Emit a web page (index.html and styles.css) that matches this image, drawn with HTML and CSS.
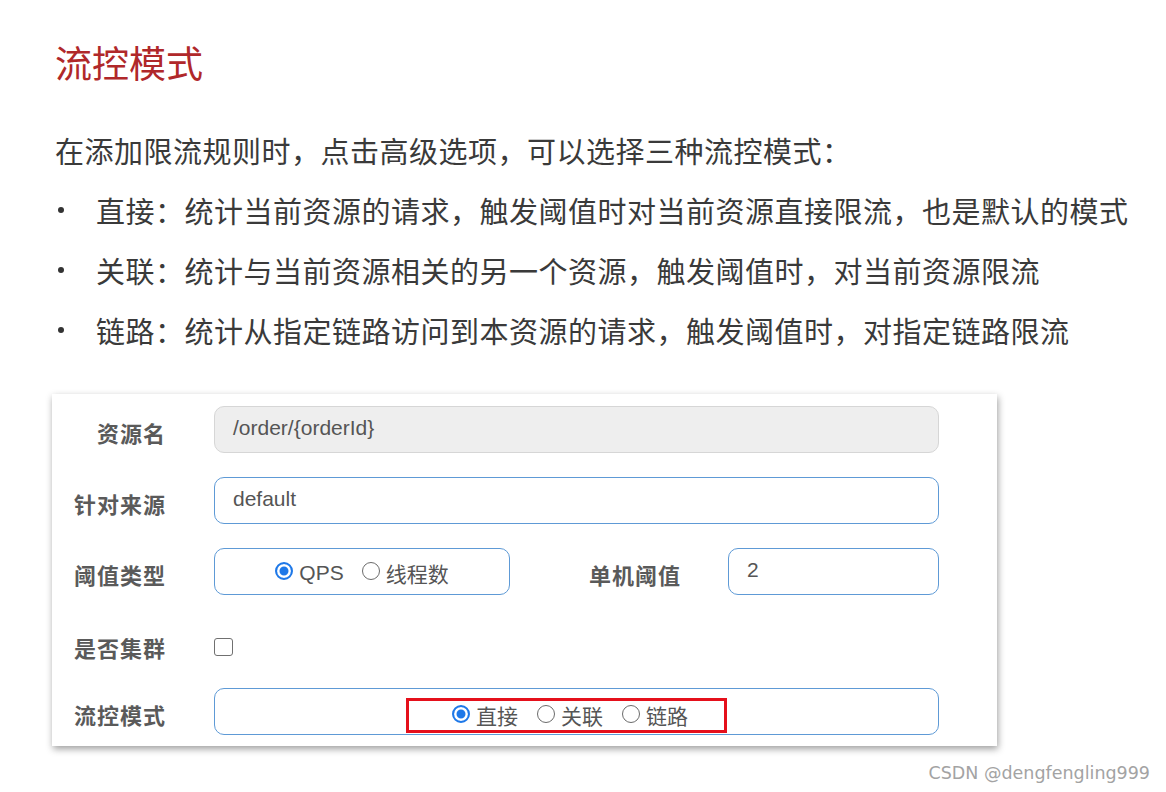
FILE: index.html
```html
<!DOCTYPE html>
<html lang="zh-CN">
<head>
<meta charset="utf-8">
<title>流控模式</title>
<link rel="stylesheet" href="styles.css">
</head>
<body>
<main class="page">
  <h1 class="title">流控模式</h1>
  <p class="intro">在添加限流规则时，点击高级选项，可以选择三种流控模式：</p>
  <ul class="list">
    <li><span class="dot"></span>直接：统计当前资源的请求，触发阈值时对当前资源直接限流，也是默认的模式</li>
    <li><span class="dot"></span>关联：统计与当前资源相关的另一个资源，触发阈值时，对当前资源限流</li>
    <li><span class="dot"></span>链路：统计从指定链路访问到本资源的请求，触发阈值时，对指定链路限流</li>
  </ul>

  <section class="card">
    <div class="row">
      <label class="label">资源名</label>
      <div class="field field-disabled">/order/{orderId}</div>
    </div>
    <div class="row">
      <label class="label">针对来源</label>
      <div class="field">default</div>
    </div>
    <div class="row">
      <label class="label">阈值类型</label>
      <div class="field field-radio field-small">
        <span class="opt"><span class="radio on"></span><span class="latin">QPS</span></span>
        <span class="opt"><span class="radio"></span>线程数</span>
      </div>
      <label class="label label-wide">单机阈值</label>
      <div class="field field-num">2</div>
    </div>
    <div class="row row-check">
      <label class="label">是否集群</label>
      <span class="checkbox"></span>
    </div>
    <div class="row">
      <label class="label">流控模式</label>
      <div class="field field-radio">
        <span class="mark">
          <span class="opt"><span class="radio on"></span>直接</span>
          <span class="opt"><span class="radio"></span>关联</span>
          <span class="opt"><span class="radio"></span>链路</span>
        </span>
      </div>
    </div>
  </section>
  <div class="watermark">CSDN @dengfengling999</div>
</main>
</body>
</html>
```

FILE: styles.css
```css
* { box-sizing: border-box; }
html, body { margin: 0; padding: 0; background: #fff; }
body {
  font-family: "Noto Sans CJK SC", "Noto Sans", sans-serif;
  color: #3a3a3a;
  width: 1166px;
  height: 792px;
  overflow: hidden;
}
.page { padding: 40px 0 0 0; }
.title {
  margin: 0 0 36px 55px;
  font-size: 37px;
  line-height: 44px;
  font-weight: 400;
  color: #b0282a;
}
.intro {
  margin: 0 0 0 55px;
  font-size: 29px;
  letter-spacing: 0.5px;
  line-height: 60px;
}
.list { list-style: none; margin: 0; padding: 0 0 0 55px; }
.list li {
  display: flex;
  align-items: center;
  font-size: 29px;
  letter-spacing: 0.5px;
  line-height: 60px;
  white-space: nowrap;
}
.dot {
  display: inline-block;
  width: 6px;
  height: 6px;
  border-radius: 50%;
  background: #333;
  margin: 0 32px 0 3px;
}

.card {
  margin: 34px 0 0 52px;
  width: 945px;
  height: 352px;
  padding: 12px 58px 0 0;
  background: #fff;
  box-shadow: 1px 3px 7px rgba(0,0,0,0.38);
  display: flex;
  flex-direction: column;
  gap: 24px;
}
.row {
  display: flex;
  align-items: center;
  height: 47px;
}
.label {
  width: 114px;
  flex: none;
  text-align: right;
  font-size: 22px;
  letter-spacing: 1px;
  font-weight: 700;
  color: #5a5a5a;
  padding-top: 5px;
  margin-right: 48px;
}
.label-wide { width: 171px; margin-right: 47px; }
.field {
  flex: 1;
  height: 47px;
  border: 1.5px solid #5e9ad6;
  border-radius: 10px;
  padding: 0 0 4px 18px;
  display: flex;
  align-items: center;
  font-family: "Liberation Sans", Arial, sans-serif;
  font-size: 21px;
  color: #555;
}
.field-disabled {
  background: #eeeeee;
  border-color: #d6d6d6;
}
.field-small { flex: none; width: 296px; }
.field-num { flex: none; width: 211px; }
.field-radio {
  justify-content: center;
  padding: 2px 0 0 0;
  font-family: "Noto Sans CJK SC", sans-serif;
  color: #555;
  gap: 18px;
}
.field-small.field-radio { padding-left: 0; padding-right: 0; }
.opt {
  display: inline-flex;
  align-items: center;
  gap: 6px;
  font-size: 21px;
}
.latin { font-family: "Liberation Sans", Arial, sans-serif; }
.radio {
  width: 18px;
  height: 18px;
  border-radius: 50%;
  border: 1.5px solid #6b6b6b;
  background: #fff;
  flex: none;
  margin-top: -3px;
}
.radio.on {
  border: 2px solid #1e78e8;
  box-shadow: inset 0 0 0 2.5px #fff, inset 0 0 0 10px #1e78e8;
}
.mark {
  display: inline-flex;
  align-items: center;
  justify-content: flex-start;
  gap: 19px;
  width: 321px;
  height: 35px;
  border: 3px solid #e5101b;
  padding: 0 0 0 43px;
  margin: 5px 20px 0 0;
}
.row-check { height: 45px; margin-top: 5px; margin-bottom: -5px; }
.row-check .label { padding-top: 0; }
.checkbox {
  width: 19px;
  height: 18px;
  border: 1.5px solid #707070;
  border-radius: 3px;
  background: #fff;
}
.watermark {
  margin-top: 17px;
  padding-right: 16px;
  text-align: right;
  font-family: "DejaVu Sans", sans-serif;
  font-size: 17.5px;
  line-height: 20px;
  color: #a3a3a3;
}
```
